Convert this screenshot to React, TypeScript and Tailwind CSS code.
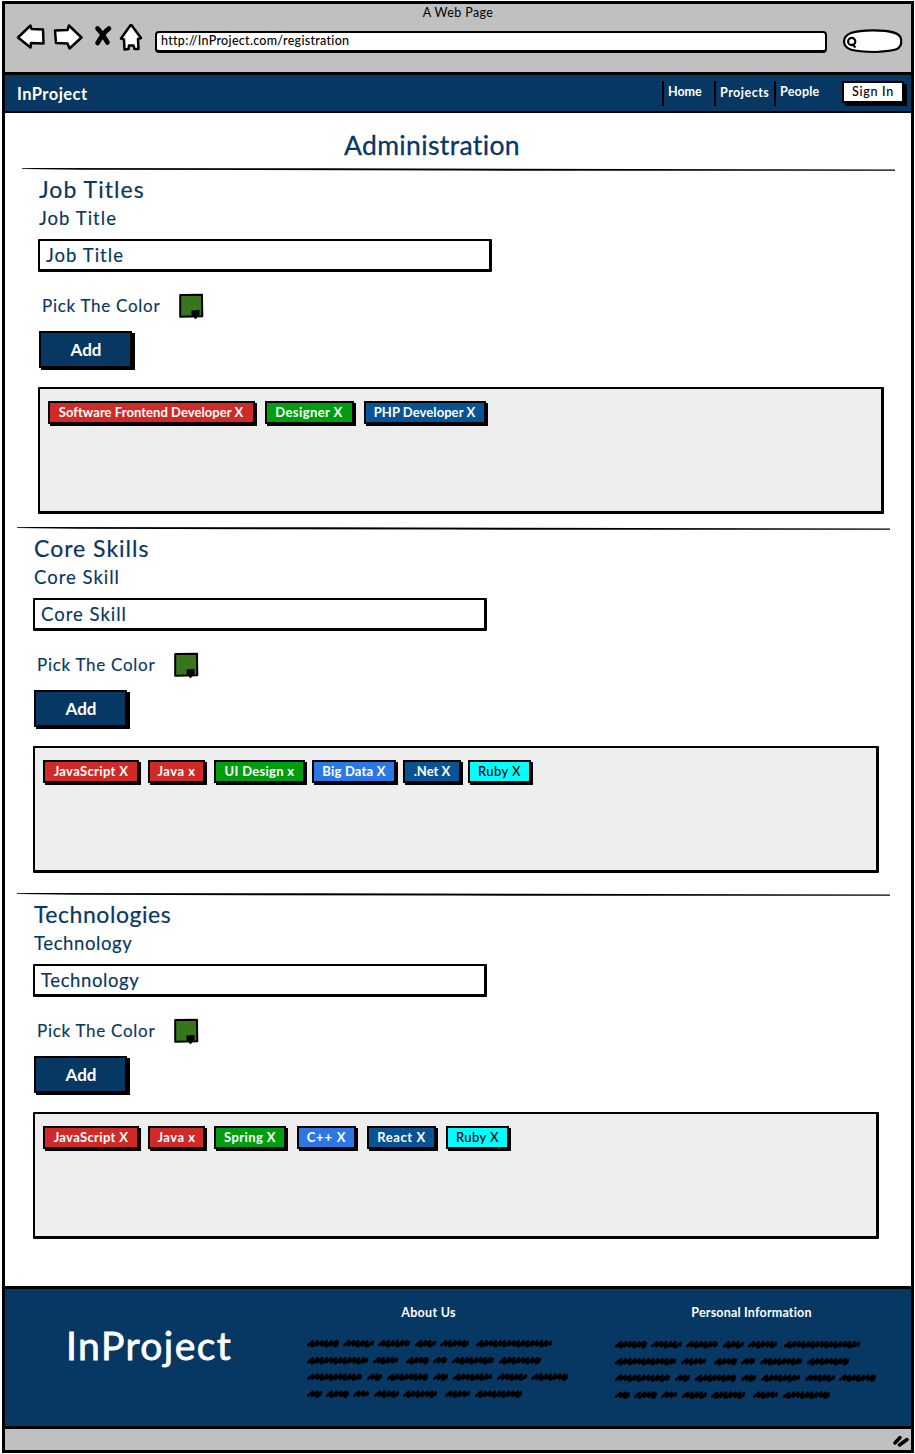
import React from "react";

type Tag = { label: string; box: string };
type SectionProps = {
  title: string;
  field: string;
  indent: string;
  height: string;
  titleTracking: string;
  labelTracking: string;
  tags: Tag[];
};

const RED = "bg-[#cf2a27] text-white font-bold";
const GREEN = "bg-[#009e0f] text-white font-bold";
const BLUE = "bg-[#2b78e4] text-white font-bold";
const NAVY = "bg-[#085394] text-white font-bold";
const CYAN = "bg-[#00ffff] text-black font-medium";

function Rule() {
  return (
    <svg className="block h-[4px] w-[873px]" viewBox="0 0 873 4">
      <path d="M0 .2 L14 0 L300 .3 L873 1.6 L873 2.8 L430 2.6 L60 1.7 L0 1Z" fill="#000" />
    </svg>
  );
}

function Section({ title, field, indent, height, titleTracking, labelTracking, tags }: SectionProps) {
  return (
    <section className={`${indent} ${height} text-[#073763]`}>
      <Rule />
      <div className="ml-[16px] flex flex-col items-start">
        <h2 className={`ml-px mt-[3px] h-[28px] whitespace-nowrap text-[23px] leading-[28px] [-webkit-text-stroke:0.2px] ${titleTracking}`}>{title}</h2>
        <label className={`ml-px mt-[3px] h-[24px] whitespace-nowrap text-[18.5px] leading-[24px] [-webkit-text-stroke:0.15px] ${labelTracking}`}>{field}</label>
        <div className="mt-[9px] flex h-[33px] w-[454px] items-center rounded-[1px] border-2 border-b-[3px] border-r-[3px] border-black bg-white pb-px pl-[6px]">
          <span className={`whitespace-nowrap text-[18.5px] leading-[24px] [-webkit-text-stroke:0.15px] ${labelTracking}`}>{field}</span>
        </div>
        <div className="mt-[21px] flex h-[26px] items-start pl-[4px]">
          <span className="w-[137px] whitespace-nowrap text-[17px] leading-[25px] tracking-[0.72px] [-webkit-text-stroke:0.15px]">Pick The Color</span>
          <svg width="26" height="28" viewBox="0 0 26 28">
            <path d="M1.2 2L23 1.7L23.3 23.2L1.2 23.8Z" fill="#38761d" stroke="#000" strokeWidth="2" strokeLinejoin="round" />
            <path d="M12.500 17.500L20.500 17V21.500L16.500 26.500L12.500 21.500Z" fill="#000" />
          </svg>
        </div>
        <button className="ml-px mt-[12px] h-[37px] w-[93px] border-2 border-black bg-[#073763] pl-px text-[17px] font-bold leading-[32px] text-white shadow-[2px_2px_0_#000,3px_2px_0_#000]">
          Add
        </button>
        <div className="mt-[19px] flex h-[127px] w-[846px] items-start rounded-[1px] border-2 border-b-[3px] border-r-[3px] border-black bg-[#eeeeee] pl-[8px] pt-[12px]">
          {tags.map((t, i) => (
            <span
              key={i}
              className={`flex h-[23px] shrink-0 items-center justify-center whitespace-nowrap border-2 border-black pb-px text-[13px] leading-[17px] shadow-[2px_2px_0_#000] ${t.box}`}
            >
              {t.label}
            </span>
          ))}
        </div>
      </div>
    </section>
  );
}

const WORDS: number[][][] = [
  [[0, 32], [36, 67], [71, 103], [108, 129], [133, 162], [169, 245]],
  [[0, 61], [66, 91], [99, 122], [126, 140], [145, 187], [192, 234]],
  [[0, 55], [60, 75], [80, 121], [126, 141], [146, 185], [190, 220], [224, 261]],
  [[0, 15], [19, 42], [46, 62], [67, 92], [96, 130], [138, 163], [168, 215]],
];
const LINES = [8.5, 25.5, 42, 59];

/* A handwriting-like zigzag between a and b around the line y. */
function scribble(a: number, b: number, y: number, seed: number) {
  let d = `M${a + 1.3} ${y + 1.6}`;
  let i = seed;
  for (let x = a + 6; x <= b - 2.2; x += 4.6) {
    const low = (i * 7) % 5 < 2;
    d += `L${x.toFixed(1)} ${(y - 2.2).toFixed(1)}`;
    d += low
      ? `Q${(x - 3).toFixed(1)} ${y + 4} ${(x + 0.4).toFixed(1)} ${y + 2.4}`
      : `L${(x - 0.6).toFixed(1)} ${(y + 1.8).toFixed(1)}`;
    i++;
  }
  return d + `L${b - 1.2} ${y - 1.6}L${b - 1.8} ${y + 0.8}`;
}

function Scribbles() {
  return (
    <svg width="264" height="66" viewBox="0 0 264 66" fill="none" stroke="#000" strokeWidth="2.7" strokeLinecap="round" strokeLinejoin="round">
      {WORDS.map((line, r) => line.map(([a, b], c) => <path key={`${r}-${c}`} d={scribble(a, b, LINES[r], r * 3 + c)} />))}
    </svg>
  );
}

export default function App() {
  return (
    <div className="h-[1454px] w-[915px] overflow-hidden bg-white pl-[2px] pt-[1px] font-['Lato',sans-serif] [font-variant-ligatures:none]">
      <div className="flex h-[1452px] w-[912px] flex-col border-[3px] border-black bg-white">
        <header className="h-[68px] shrink-0 bg-[#c0c0c0]">
          <p className="h-[20px] text-center text-[12.5px] leading-[18px] tracking-[0.4px] text-black">A Web Page</p>
          <div className="flex items-start">
            <svg className="ml-[11px]" width="128" height="32" viewBox="16 24 128 32" fill="#fff" stroke="#000" strokeWidth="2.5" strokeLinejoin="round">
              <path d="M18 37.500L30.500 25.500L31.500 29L43 29.500L43.500 43.500L31 43L30.500 47.500Z" />
              <path d="M55 30.500L67.500 30L69 25.500L81.500 37.500L69.500 48.500L67.500 43.500L56 43Z" />
              <path d="M97.500 28.500Q102 33 107.500 42.500M109 28.500Q104 32 97.500 43" strokeWidth="4.6" strokeLinecap="round" fill="none" />
              <path d="M131 24.500L141 38L138 39L138.500 49L134.500 49L133.500 45.500L129 45.500L128.500 49L124.500 49.500L124 39.500L121 38.500Z" />
            </svg>
            <div className="ml-[11px] mt-[7px] h-[22px] w-[672px] rounded-[4px] border-2 border-b-[3px] border-black bg-white pl-[4px] text-[12.5px] font-medium leading-[15px] tracking-[0.3px] text-black">
              http://InProject.com/registration
            </div>
            <svg className="ml-[15px] mt-[5px]" width="62" height="26" viewBox="842 29 62 26" fill="#fff" stroke="#000" strokeWidth="2.2">
              <path d="M844 41.500C844.500 33 854 30.500 873 30.300C892 30.300 901 33 901.200 40C902 50 896 50.500 876 52C852 51.500 844.500 50 844 41.500Z" />
              <circle cx="851.700" cy="41.500" r="3.600" />
              <path d="M852 44L855.500 47.500" />
            </svg>
          </div>
        </header>
        <nav className="flex h-[41px] shrink-0 items-center border-t-[3px] border-b-2 border-black bg-[#073763] pl-[12px] text-white">
          <span className="w-[645px] pt-[2px] text-[16.5px] font-bold tracking-[0.45px]">InProject</span>
          <span className="h-[25px] w-[52px] border-l-[2px] border-black pl-[4px] pt-[2px] text-[12.5px] font-bold">Home</span>
          <span className="h-[25px] w-[60px] border-l-[2px] border-black pl-[4px] pt-[3px] text-[12.5px] font-bold tracking-[0.5px]">Projects</span>
          <span className="h-[25px] w-[68px] border-l-[2px] border-black pl-[4px] pt-[2px] text-[12.5px] font-bold tracking-[0.2px]">People</span>
          <button className="mb-[2px] h-[22px] w-[62px] whitespace-nowrap border-2 border-black bg-white text-[12.5px] font-medium leading-[16px] tracking-[0.75px] text-black shadow-[3px_3px_0_#000]">Sign In</button>
        </nav>
        <main className="h-[1173px] shrink-0 overflow-hidden">
          <h1 className="ml-[339px] h-[55px] whitespace-nowrap pt-[14px] text-[26.5px] leading-[36px] tracking-[0.36px] text-[#073763] [-webkit-text-stroke:0.3px]">Administration</h1>
          <Section title="Job Titles" field="Job Title" indent="pl-[17px]" height="h-[359px]" titleTracking="tracking-[1.05px]" labelTracking="tracking-[1.05px]"
            tags={[{ label: "Software Frontend Developer X", box: `w-[207px] mr-[10px] pr-px tracking-[0.05px] ${RED}` }, { label: "Designer X", box: `w-[89px] mr-[10px] pr-px tracking-[0.4px] ${GREEN}` }, { label: "PHP Developer X", box: `w-[122px] pr-px tracking-[0.07px] ${NAVY}` }]} />
          <Section title="Core Skills" field="Core Skill" indent="pl-[12px]" height="h-[366px]" titleTracking="tracking-[1px]" labelTracking="tracking-[1px]"
            tags={[{ label: "JavaScript X", box: `w-[96px] mr-[9px] tracking-[0.35px] ${RED}` }, { label: "Java x", box: `w-[57px] mr-[9px] tracking-[0.5px] ${RED}` }, { label: "UI Design x", box: `w-[91px] mr-[7px] tracking-[0.3px] ${GREEN}` }, { label: "Big Data X", box: `w-[84px] mr-[7px] tracking-[0.2px] ${BLUE}` }, { label: ".Net X", box: `w-[58px] mr-[7px] ${NAVY}` }, { label: "Ruby X", box: `w-[63px] tracking-[0.4px] ${CYAN}` }]} />
          <Section title="Technologies" field="Technology" indent="pl-[12px]" height="h-[390px]" titleTracking="tracking-[0.55px]" labelTracking="tracking-[0.6px]"
            tags={[{ label: "JavaScript X", box: `w-[96px] mr-[9px] tracking-[0.35px] ${RED}` }, { label: "Java x", box: `w-[57px] mr-[9px] tracking-[0.5px] ${RED}` }, { label: "Spring X", box: `w-[72px] mr-[11px] tracking-[0.4px] ${GREEN}` }, { label: "C++ X", box: `w-[59px] mr-[11px] tracking-[0.8px] ${BLUE}` }, { label: "React X", box: `w-[69px] mr-[10px] tracking-[0.6px] ${NAVY}` }, { label: "Ruby X", box: `w-[63px] tracking-[0.4px] ${CYAN}` }]} />
        </main>
        <footer className="flex h-[143px] shrink-0 border-y-[3px] border-black bg-[#073763] text-white">
          <div className="w-[302px] whitespace-nowrap pl-[61px] pt-[31px] text-[39px] leading-[50px] tracking-[1.45px] [-webkit-text-stroke:0.8px]">InProject</div>
          <div className="w-[308px]">
            <h3 className="mb-[13px] w-[243px] pt-[15px] text-center text-[12.5px] font-bold leading-[18px] tracking-[0.3px]">About Us</h3>
            <Scribbles />
          </div>
          <div className="w-[264px]">
            <h3 className="mb-[14px] w-[273px] pt-[15px] text-center text-[12.5px] font-bold leading-[18px] tracking-[0.2px]">Personal Information</h3>
            <Scribbles />
          </div>
        </footer>
        <div className="flex grow justify-end bg-[#c0c0c0]">
          <svg className="mr-[2px] mt-[3px]" width="20" height="16" viewBox="0 0 20 16" stroke="#000" strokeWidth="3.5" strokeLinecap="round">
            <path d="M6 11L11 5.500M10.500 13L18 7.500" />
          </svg>
        </div>
      </div>
    </div>
  );
}
